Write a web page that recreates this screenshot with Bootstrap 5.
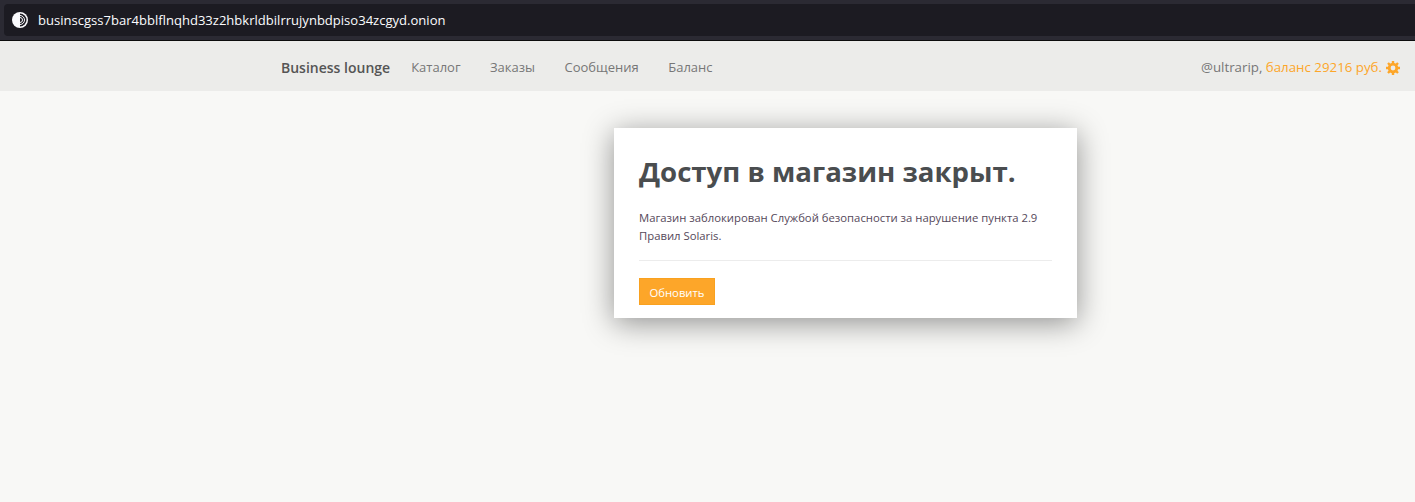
<!DOCTYPE html>
<html lang="ru">
<head>
  <meta charset="UTF-8">
  <title>Business lounge</title>
  <link href="https://cdn.jsdelivr.net/npm/bootstrap@5.3.3/dist/css/bootstrap.min.css" rel="stylesheet">
  <style>
    html, body { height: 100%; overflow: hidden; }
    body { background: #f8f8f6; font-family: "Open Sans", "Noto Sans", sans-serif; font-size: 12px; color: #4a4a4a; }
    .browser-bar { height: 41px; background: #2b2a33; border-bottom: 1px solid #0c0c0d; padding: 4px 0 4px 4px; }
    .url-box { height: 32px; background: #1c1b22; border-radius: 4px 0 0 4px; padding-left: 8px; gap: 10px; color: #fbfbfe; font-size: 13.05px; }
    .url-text { padding-top: 2px; }
    .shop-nav { height: 50px; background: #ececea; padding: 3px 15px 0 281px; }
    .shop-brand { font-size: 14px; font-weight: 600; color: #555; margin-right: 21px; }
    .shop-link { font-size: 13px; color: #777; margin-right: 29.5px; text-decoration: none; }
    .shop-user { font-size: 13.3px; color: #777; }
    .shop-money { color: #fda629; }
    .page-body { padding-top: 37px; padding-left: 614px; }
    .closed-card { width: 463px; height: 190px; border: 0; border-radius: 0; padding: 25px; box-shadow: 0 5px 28px rgba(0, 0, 0, .42); }
    .closed-title { font-size: 27.6px; font-weight: 700; color: #4a4d4f; line-height: 36px; margin: 0 0 20px; }
    .closed-text { font-size: 11.3px; line-height: 18px; color: #55485a; margin: 0; }
    .closed-line { margin: 15px 0 17px; border-color: #ececec; opacity: 1; }
    .btn-refresh { background: #fda629; border: 1px solid #f9a11f; border-radius: 0; color: #fff; font-size: 11.3px; line-height: 16px; padding: 6px 0 4px; width: 76px; height: 27px; }
  </style>
</head>
<body>

<!-- address bar -->
<div class="browser-bar">
  <div class="url-box d-flex align-items-center">
    <svg width="16" height="16" viewBox="0 0 16 16">
      <circle cx="8" cy="8" r="8" fill="#fbfbfe"/>
      <path d="M8 1.5a6.5 6.5 0 0 1 0 13z" fill="#1c1b22"/>
      <path d="M8 3.5a4.5 4.5 0 0 1 0 9M8 5.5a2.5 2.5 0 0 1 0 5" fill="none" stroke="#fbfbfe" stroke-width="1"/>
    </svg>
    <span class="url-text">businscgss7bar4bblflnqhd33z2hbkrldbilrrujynbdpiso34zcgyd.onion</span>
  </div>
</div>

<!-- Navbar -->
<nav class="navbar shop-nav flex-nowrap">
  <div class="d-flex align-items-center">
    <span class="shop-brand">Business lounge</span>
    <a class="shop-link" href="#">Каталог</a>
    <a class="shop-link" href="#">Заказы</a>
    <a class="shop-link" href="#">Сообщения</a>
    <a class="shop-link" href="#">Баланс</a>
  </div>
  <div class="shop-user d-flex align-items-center gap-1">
    <span>@ultrarip, <span class="shop-money">баланс 29216 руб.</span></span>
    <svg width="14" height="14" viewBox="0 0 14 14">
      <circle cx="7" cy="7" r="3.8" fill="none" stroke="#fda629" stroke-width="2.8"/>
      <path d="M7 7 7 0M7 7 7 14M7 7 0 7M7 7 14 7M7 7 2 2M7 7 12 2M7 7 2 12M7 7 12 12" stroke="#fda629" stroke-width="2.4" stroke-dasharray="0 4.2 6 9"/>
    </svg>
  </div>
</nav>

<!-- Main Content -->
<div class="page-body">
  <div class="card closed-card">
    <h1 class="closed-title">Доступ в магазин закрыт.</h1>
    <p class="closed-text">Магазин заблокирован Службой безопасности за нарушение пункта 2.9 Правил Solaris.</p>
    <hr class="closed-line">
    <div><button class="btn btn-refresh">Обновить</button></div>
  </div>
</div>

<script src="https://cdn.jsdelivr.net/npm/bootstrap@5.3.3/dist/js/bootstrap.bundle.min.js"></script>
</body>
</html>
